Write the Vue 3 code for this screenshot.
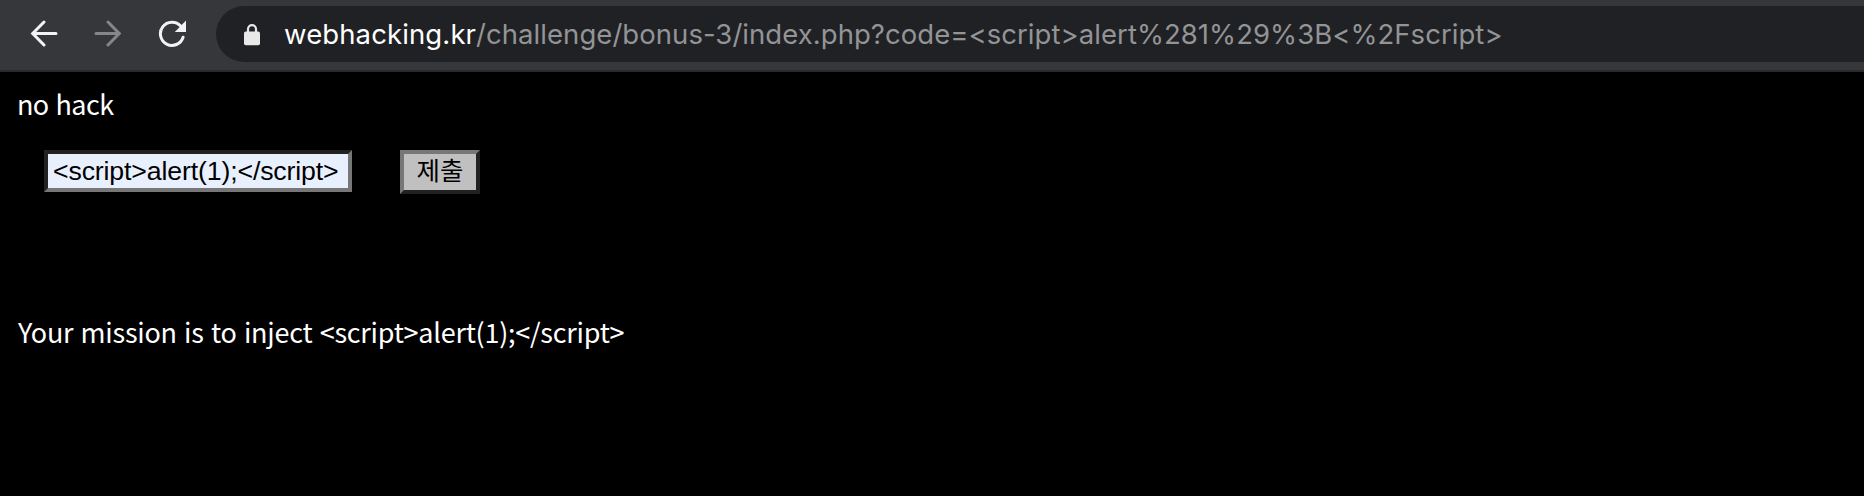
<script setup>
import { ref } from 'vue'

const code = ref('<script>alert(1);<' + '/script>')
</script>

<template>
  <div class="window">
    <header class="toolbar">
      <svg class="icon back" viewBox="0 0 28 28" aria-label="Back">
        <path d="M26 14.5H3M14 3L2.7 14.5L14 26" />
      </svg>
      <svg class="icon forward" viewBox="0 0 28 28" aria-label="Forward">
        <path d="M2 14.5H25M14 3L25.3 14.5L14 26" />
      </svg>
      <svg class="icon reload" viewBox="0 0 28 28" aria-label="Reload">
        <path d="M25.1 18.2A11.6 11.6 0 1 1 22.7 7.1" />
        <path class="solid" d="M28 1.5V13H16.8Z" />
      </svg>
      <div class="address">
        <svg class="lock" viewBox="0 0 16 22">
          <path class="shackle" d="M4 9V5.2a4 4 0 0 1 8 0V9" />
          <rect x="0" y="7.5" width="16" height="13.8" rx="1.8" />
        </svg>
        <div class="url"><span class="host">webhacking.kr</span><span class="path">/challenge/bonus-3/index.php?code=&lt;script&gt;alert%281%29%3B&lt;%2Fscript&gt;</span></div>
      </div>
    </header>
    <main class="page">
      <div class="line result"><span>no hack</span></div>
      <form class="form" @submit.prevent>
        <input v-model="code" class="field" type="text" spellcheck="false" />
        <button class="submit" type="submit">제출</button>
      </form>
      <div class="line mission"><span>Your mission is to inject &lt;script&gt;alert(1);&lt;/script&gt;</span></div>
    </main>
  </div>
</template>

<style>
body {
  margin: 0;
  background: #000;
}
</style>

<style scoped>
.window {
  width: 100%;
  height: 496px;
  overflow: hidden;
  background: #000;
}
.toolbar {
  box-sizing: border-box;
  display: flex;
  align-items: flex-start;
  height: 72px;
  padding: 6px 0 0 30px;
  background: #36373b;
  border-bottom: 2px solid #292a2b;
}
.icon {
  width: 28px;
  height: 28px;
  margin-top: 13px;
  flex: none;
  fill: none;
  stroke: #f1f3f4;
  stroke-width: 3;
  stroke-linecap: round;
}
.forward {
  margin-left: 36px;
  stroke: #858689;
}
.reload {
  margin-left: 36px;
}
.solid {
  fill: #f1f3f4;
  stroke: none;
}
.address {
  display: flex;
  flex: 1;
  height: 56px;
  margin-left: 30px;
  padding-left: 28px;
  background: #202124;
  border-radius: 28px 0 0 28px;
}
.lock {
  width: 16px;
  height: 22px;
  margin: 17.5px 24px 0 0;
  flex: none;
  fill: #e8e8e8;
}
.shackle {
  fill: none;
  stroke: #e8e8e8;
  stroke-width: 2.2;
}
.url {
  font: 27.5px/56px Inter, sans-serif;
  white-space: nowrap;
  color: #939496;
}
.host {
  color: #fff;
  letter-spacing: 0.12px;
}
.path {
  letter-spacing: 0.05px;
}
.page {
  padding: 10px 18px;
}
.line {
  height: 44px;
  font: 27px/44px "Noto Sans CJK KR", sans-serif;
  letter-spacing: -0.25px;
  word-spacing: 1.5px;
  white-space: nowrap;
  color: #fff;
}
.result {
  margin-left: -1px;
  letter-spacing: -0.6px;
}
.form {
  display: flex;
  align-items: flex-start;
  gap: 48px;
  height: 44px;
  margin: 24px 0 116px 26px;
}
.field {
  box-sizing: border-box;
  width: 308px;
  height: 42px;
  margin: 0;
  padding: 0 5px;
  border: 4px solid;
  border-color: #222 #777 #777 #222;
  border-radius: 0;
  outline: none;
  background: #e8f0fe;
  color: #000;
  font: 26.67px "Liberation Sans", Arial, sans-serif;
  letter-spacing: -0.13px;
}
.submit {
  box-sizing: border-box;
  width: 80px;
  height: 44px;
  margin: 0;
  padding: 0 0 3px;
  border: 4px solid;
  border-color: #777 #222 #222 #777;
  border-radius: 0;
  background: #c0c0c0;
  color: #000;
  font: 25.5px/32px "Liberation Sans", "Noto Sans CJK KR", sans-serif;
}
</style>
